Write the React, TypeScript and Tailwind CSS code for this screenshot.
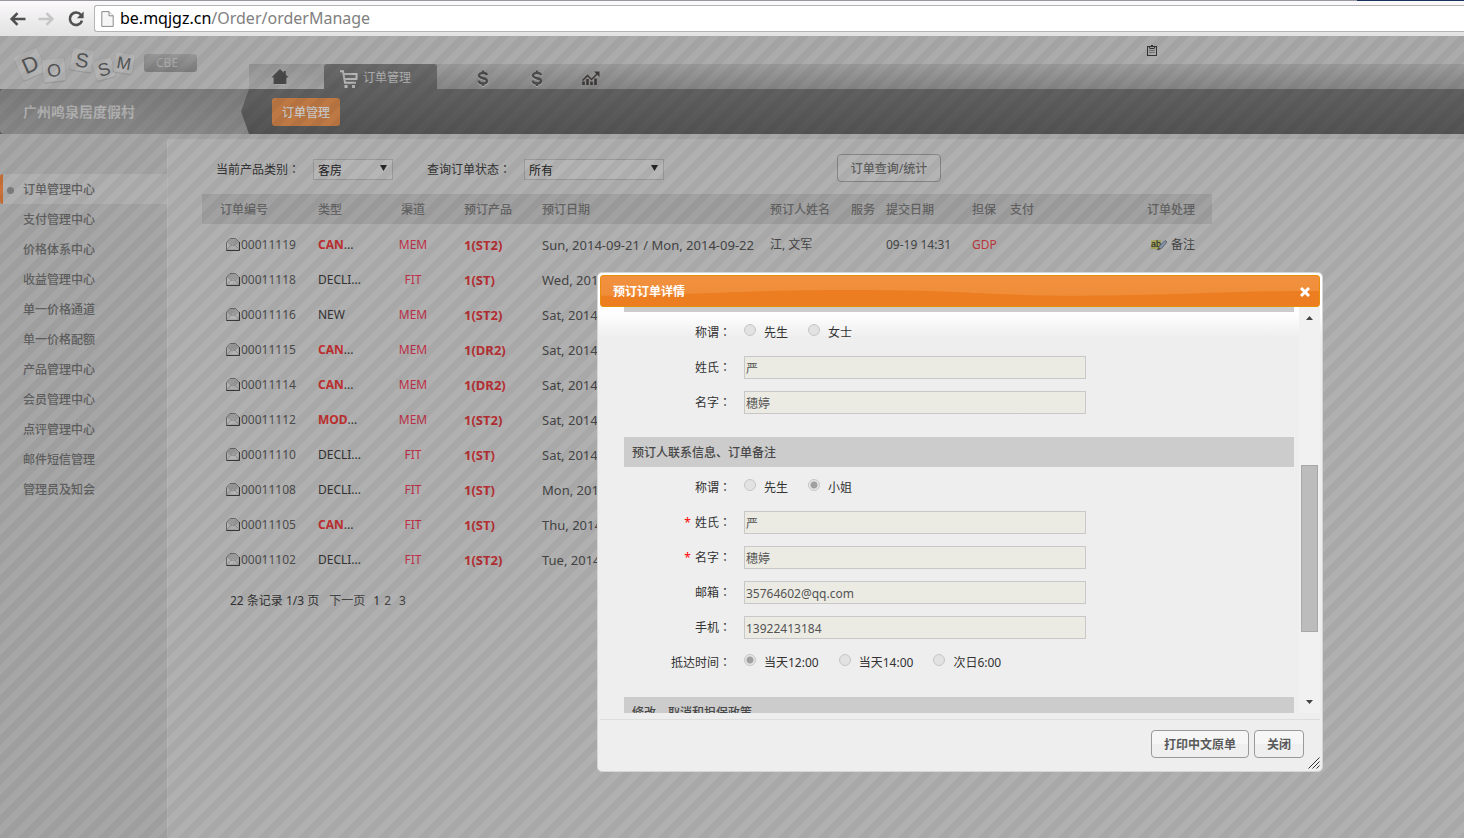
import React from "react";

const sidebarItems = [
  "订单管理中心",
  "支付管理中心",
  "价格体系中心",
  "收益管理中心",
  "单一价格通道",
  "单一价格配额",
  "产品管理中心",
  "会员管理中心",
  "点评管理中心",
  "邮件短信管理",
  "管理员及知会",
];

type Order = {
  id: string;
  type: string;
  urgent?: boolean;
  channel: string;
  product: string;
  date: string;
  name?: string;
  submitted?: string;
  guarantee?: string;
};

const orders: Order[] = [
  { id: "00011119", type: "CAN", urgent: true, channel: "MEM", product: "1(ST2)", date: "Sun, 2014-09-21 / Mon, 2014-09-22", name: "江, 文军", submitted: "09-19 14:31", guarantee: "GDP" },
  { id: "00011118", type: "DECLI...", channel: "FIT", product: "1(ST)", date: "Wed, 2014-09-17" },
  { id: "00011116", type: "NEW", channel: "MEM", product: "1(ST2)", date: "Sat, 2014-09-20" },
  { id: "00011115", type: "CAN", urgent: true, channel: "MEM", product: "1(DR2)", date: "Sat, 2014-09-20" },
  { id: "00011114", type: "CAN", urgent: true, channel: "MEM", product: "1(DR2)", date: "Sat, 2014-09-20" },
  { id: "00011112", type: "MOD", urgent: true, channel: "MEM", product: "1(ST2)", date: "Sat, 2014-09-20" },
  { id: "00011110", type: "DECLI...", channel: "FIT", product: "1(ST)", date: "Sat, 2014-09-20" },
  { id: "00011108", type: "DECLI...", channel: "FIT", product: "1(ST)", date: "Mon, 2014-09-15" },
  { id: "00011105", type: "CAN", urgent: true, channel: "FIT", product: "1(ST)", date: "Thu, 2014-09-11" },
  { id: "00011102", type: "DECLI...", channel: "FIT", product: "1(ST2)", date: "Tue, 2014-09-09" },
];

function Colon() {
  return <span className="font-['Noto_Sans_CJK_TC',sans-serif]">：</span>;
}

function BrowserBar() {
  return (
    <div className="relative flex h-9 shrink-0 items-center border-t border-[#98989f] bg-linear-to-b from-[#fbf9fb] to-[#e2e2e2]">
      <div className="absolute -top-px right-0 h-px w-[107px] bg-[#17305c]" />
      <button aria-label="后退" className="ml-2 flex w-5 justify-center">
        <svg width="18" height="16" viewBox="0 0 18 16" fill="none" stroke="#505050" strokeWidth="2.6">
          <path d="M16.5 8H3M8.5 2.2 2.7 8l5.8 5.8" />
        </svg>
      </button>
      <button aria-label="前进" className="ml-2 flex w-5 justify-center">
        <svg width="18" height="16" viewBox="0 0 18 16" fill="none" stroke="#c6c6c6" strokeWidth="2.6">
          <path d="M1.5 8H15M9.5 2.2 15.3 8l-5.8 5.8" />
        </svg>
      </button>
      <button aria-label="刷新" className="ml-2 flex w-6 justify-center">
        <svg width="18" height="18" viewBox="0 0 18 18" fill="none">
          <path d="M14.2 5.2A6.2 6.2 0 1 0 15 10.6" stroke="#505050" strokeWidth="2.6" />
          <path d="M16.6 1.4v6.8H9.8z" fill="#505050" />
        </svg>
      </button>
      <div className="ml-1.5 flex h-[27px] flex-1 items-center rounded-l-[3px] border border-r-0 border-[#b4b4b4] bg-white pl-1.5">
        <svg width="13" height="16" viewBox="0 0 13 16" fill="#f6f6f6" stroke="#8a8a8a">
          <path d="M.8.6h7.2l4.2 4.2v10.6H.8z" />
          <path d="M8 .6v4.2h4.2" />
        </svg>
        <div className="ml-[6px] pb-[2px] font-['Noto_Sans','Open_Sans',sans-serif] text-[16px] leading-6 text-[#808080]">
          <span className="text-black">be.mqjgz.cn</span>/Order/orderManage
        </div>
      </div>
    </div>
  );
}

function Logo() {
  const tiles = [
    { c: "D", x: 30, y: 28, r: -24, s: 26, f: 22 },
    { c: "O", x: 54, y: 34, r: -6, s: 23, f: 18 },
    { c: "S", x: 82, y: 24, r: 8, s: 22, f: 20 },
    { c: "S", x: 104, y: 33, r: -16, s: 20, f: 18 },
    { c: "M", x: 124, y: 27, r: 10, s: 20, f: 17 },
  ];
  return (
    <svg width="140" height="53" viewBox="0 0 140 53" role="img" aria-label="DOSSM">
      {tiles.map((t, i) => (
        <g key={i} transform={`translate(${t.x} ${t.y}) rotate(${t.r})`}>
          <rect x={-t.s / 2} y={-t.s / 2 + 1} width={t.s} height={t.s} rx="2" fill="#959595" />
          <rect x={-t.s / 2} y={-t.s / 2} width={t.s} height={t.s} rx="2" fill="#b3b3b3" stroke="#a4a4a4" strokeWidth=".6" />
          <text textAnchor="middle" y={t.f * 0.36} fontSize={t.f} fill="#555" fontFamily="Liberation Sans, sans-serif">
            {t.c}
          </text>
        </g>
      ))}
    </svg>
  );
}

function HomeIcon() {
  return (
    <svg width="18" height="17" viewBox="0 0 18 17">
      <path d="M9 1 0 9.600h2.600V16h13V9.600H18l-3-3V2.600h-2v2z" fill="#b4b4b4" opacity=".6" />
      <path d="M9 0 .4 8.600h2.200V15h12.800V8.600h2.200L14.800 5.800V2h-2v1.800z" fill="#494949" />
    </svg>
  );
}

function CartIcon() {
  return (
    <svg width="18" height="18" viewBox="0 0 18 18" fill="none" stroke="#b5b5b5" strokeWidth="2">
      <path d="M0 1.200h3l2 11.600h11" />
      <path d="M4 4h12.500v5H5" />
      <rect x="4.500" y="15" width="3" height="3" fill="#b5b5b5" stroke="none" />
      <rect x="12" y="15" width="3" height="3" fill="#b5b5b5" stroke="none" />
    </svg>
  );
}

function DollarIcon() {
  return (
    <svg width="12" height="18" viewBox="0 0 12 18" fill="none">
      <path d="M10.500 6.200C10 4.500 8.200 4 6 4 3.500 4 2 4.900 2 6.500c0 3.800 8.300 1.500 8.300 5.300C10.300 13.500 8.500 14.500 6 14.500S1.800 13.600 1.500 11.600M6 1v3M6 14.500V17" stroke="#b0b0b0" strokeWidth="2.400" />
      <path d="M10 5.200C9.600 3.700 8 3 6 3 3.500 3 2 4 2 5.600c0 3.700 8 1.500 8 5.200 0 1.700-1.600 2.700-4 2.700s-4-.9-4.300-2.900M6 .5V3M6 13.500V16" stroke="#4c4c4c" strokeWidth="2.400" />
    </svg>
  );
}

function ChartIcon() {
  return (
    <svg width="18" height="15" viewBox="0 0 18 15" fill="none">
      <path d="M1.500 10.500V14M5.500 8v6M9.500 10.500V14M13.500 7.500V14" stroke="#3e3838" strokeWidth="2.600" />
      <path d="M.5 9.500 5.500 4.500l4 4L16 2" stroke="#3e3838" strokeWidth="1.500" />
      <path d="M12 .5h5.500V6z" fill="#3e3838" />
    </svg>
  );
}

function MailIcon() {
  return (
    <svg width="14" height="13" viewBox="0 0 14 13" className="shrink-0">
      <path d="M.5 4.500 4 .5h5.500L13.300 4.500v8H.5z" fill="#b4b4b4" stroke="#666" />
      <path d="m1 4.500 3-3.500h5.500L13 4.500 9.500 7.500 7 5.800 4.500 7.500z" fill="#999" />
      <path d="M1 11.500 5 7.200h4l4 4.300" fill="none" stroke="#808080" strokeWidth=".8" />
      <path d="M.5 12.400h13V4" fill="none" stroke="#333" />
    </svg>
  );
}

function NoteIcon() {
  return (
    <svg width="17" height="12" viewBox="0 0 17 12">
      <rect width="10" height="9" y="1" fill="#a9a963" />
      <text x="0" y="8" fontSize="9" fill="#222" fontFamily="Liberation Sans, sans-serif">ab</text>
      <path d="m7 11 1-3.500L14 1.500l2 1.500L10.500 9.500z" fill="#8592a8" stroke="#4c5665" strokeWidth=".8" />
      <path d="M5 11.500 8 8.500l1.500 1.500z" fill="#55503e" />
    </svg>
  );
}

function Header() {
  return (
    <header className="shrink-0">
      <div className="flex h-[53px] items-stretch bg-[#ababab]">
        <div className="flex w-[249px] shrink-0">
          <Logo />
          <span className="mt-[18px] ml-1 h-[18px] w-[53px] rounded-[3px] bg-linear-to-b from-[#979797] to-[#7f7f7f] pl-3 font-['Noto_Sans',sans-serif] text-[12px] leading-[18px] text-[#ababab]">
            CBE
          </span>
        </div>
        <div className="flex flex-1 flex-col">
          <div className="flex h-7 flex-1 items-center">
            <button aria-label="剪贴板" className="ml-[898px]">
              <svg width="10" height="11" viewBox="0 0 10 11" fill="none">
                <rect x=".5" y="1.500" width="9" height="9" stroke="#333" />
                <path d="M2.500 3.500h5M4 .5h2" stroke="#333" />
                <path d="M2.500 3V1.500M7.500 3V1.500" stroke="#333" />
                <path d="M2 5.500h6M2 7.500h6" stroke="#777" />
              </svg>
            </button>
          </div>
          <nav className="flex h-[25px] items-center rounded-tl-[3px] bg-linear-to-b from-[#9c9c9c] to-[#858585]">
            <a href="#home" aria-label="首页" className="flex h-full w-[75px] items-center bg-linear-to-b from-[#969696] to-[#a2a2a2] pt-[2px] pl-[22px]">
              <HomeIcon />
            </a>
            <a href="#orders" className="flex h-full w-[113px] items-center gap-[5px] rounded-t-[3px] bg-linear-to-b from-[#6b6b6b] to-[#606060] pl-4 text-[12px] text-[#b0b0b0]">
              <span className="pt-[4px]"><CartIcon /></span>
              <span className="pt-[2px]">订单管理</span>
            </a>
            <a href="#pay" aria-label="支付" className="ml-10 pt-1"><DollarIcon /></a>
            <a href="#price" aria-label="价格" className="ml-[42px] pt-1"><DollarIcon /></a>
            <a href="#stats" aria-label="统计" className="ml-[39px] pt-1"><ChartIcon /></a>
          </nav>
        </div>
      </div>
      <div className="flex h-[45px] bg-linear-to-b from-[#616161] to-[#545454]">
        <div className="flex w-[249px] shrink-0 items-center rounded-l-[4px] bg-linear-to-b from-[#7d7d7d] to-[#898989] pl-[23px] text-[14px] font-bold text-[#b0b0b0] [clip-path:polygon(0_0,100%_0,241px_50%,100%_100%,0_100%)]">
          广州鸣泉居度假村
        </div>
        <div className="flex items-center pl-[23px]">
          <button className="h-7 rounded-[3px] bg-[#bd7843] px-[10px] pt-[2px] text-[12px] font-medium text-[#c8c8c8]">订单管理</button>
        </div>
      </div>
    </header>
  );
}

function Sidebar() {
  return (
    <nav className="w-[167px] shrink-0 pt-[35px]">
      {sidebarItems.map((item, i) => (
        <a
          key={item}
          href="#menu"
          className={
            i === 0
              ? "flex h-[30px] items-center rounded-l-[3px] border-l-[3px] border-[#cb7038] bg-[#b0b0b0] pt-[2px] pl-1 text-[12px] font-medium text-[#606060]"
              : "flex h-[30px] items-center pt-[2px] pl-[23px] text-[12px] font-medium text-[#606060]"
          }
        >
          {i === 0 && <span className="mr-[9px] size-[7px] rounded-full bg-[#808080]" />}
          {item}
        </a>
      ))}
    </nav>
  );
}

function SelectBox({ id, value, width }: { id: string; value: string; width: string }) {
  return (
    <span className="relative flex items-center">
      <select id={id} className={`${width} h-[21px] appearance-none border border-[#999] bg-[#b6b6b6] pt-[2px] pl-1 text-[12px] leading-[17px] text-[#222]`}>
        <option>{value}</option>
      </select>
      <svg className="pointer-events-none absolute top-[6px] right-[6px]" width="7" height="6" viewBox="0 0 7 6">
        <path d="M0 0h7L3.500 6z" fill="#262626" />
      </svg>
    </span>
  );
}

function Orders() {
  return (
    <main className="flex-1 rounded-tl-[4px] border-l border-[#b6b6b6] bg-[#b0b0b0] pl-[34px] text-[12px] text-[#454545]">
      <form className="flex h-[55px] items-center pt-[6px] pl-[14px]">
        <label htmlFor="category" className="w-[97px] text-[#333]">当前产品类别<Colon /></label>
        <SelectBox id="category" value="客房" width="w-[80px]" />
        <label htmlFor="status" className="ml-[34px] w-[97px] text-[#333]">查询订单状态<Colon /></label>
        <SelectBox id="status" value="所有" width="w-[140px]" />
        <button type="button" className="mb-1 ml-[173px] h-7 w-[104px] rounded-[4px] border border-[#858585] bg-[#b4b4b4] pt-[2px] font-medium text-[#606060]">
          订单查询/统计
        </button>
      </form>
      <table className="w-[1010px] table-fixed border-collapse text-left">
        <colgroup>
          <col className="w-[116px]" />
          <col className="w-[71px]" />
          <col className="w-[48px]" />
          <col className="w-[105px]" />
          <col className="w-[228px]" />
          <col className="w-[81px]" />
          <col className="w-[35px]" />
          <col className="w-[86px]" />
          <col className="w-[38px]" />
          <col className="w-[137px]" />
          <col className="w-[65px]" />
        </colgroup>
        <thead>
          <tr className="h-[30px] bg-[#a1a1a1] text-[#646464] [&>th]:p-0 [&>th]:pt-[2px] [&>th]:font-medium">
            <th><span className="pl-[18px]">订单编号</span></th>
            <th>类型</th>
            <th className="text-center">渠道</th>
            <th><span className="pl-[27px]">预订产品</span></th>
            <th>预订日期</th>
            <th>预订人姓名</th>
            <th>服务</th>
            <th>提交日期</th>
            <th>担保</th>
            <th>支付</th>
            <th>订单处理</th>
          </tr>
        </thead>
        <tbody className="[&_td]:p-0 [&_td]:pt-[6px]">
          {orders.map((o) => (
            <tr key={o.id} className="h-[35px] whitespace-nowrap">
              <td>
                <a href="#order" className="flex items-center gap-px pl-6 text-[#4c4c4c]">
                  <MailIcon />
                  {o.id}
                </a>
              </td>
              <td className="text-[#333]">
                {o.urgent ? <><b className="text-[#bf2f2f]">{o.type}</b>...</> : o.type}
              </td>
              <td className="text-center text-[#bf3048]">{o.channel}</td>
              <td className="text-[13px] leading-4 font-bold text-[#b52f33]"><span className="pl-[27px]">{o.product}</span></td>
              <td className="text-[13px] leading-4">{o.date}</td>
              <td>{o.name}</td>
              <td />
              <td>{o.submitted}</td>
              <td className="text-[#bf3838]">{o.guarantee}</td>
              <td />
              <td>
                {o.name && (
                  <a href="#note" className="flex items-center gap-[3px] pl-1">
                    <NoteIcon />
                    备注
                  </a>
                )}
              </td>
            </tr>
          ))}
        </tbody>
      </table>
      <div className="flex pt-[18px] pl-7">
        <span className="text-[#333]">22 条记录 1/3 页</span>
        <a href="#next" className="ml-[10px]">下一页</a>
        <span className="ml-2 text-[#333]">1</span>
        <a href="#2" className="ml-1">2</a>
        <a href="#3" className="ml-2">3</a>
      </div>
    </main>
  );
}

function Radio({ name, label, checked }: { name: string; label: string; checked?: boolean }) {
  return (
    <label className="mr-5 flex items-center gap-2">
      <input
        type="radio"
        name={name}
        disabled
        defaultChecked={checked}
        className="mb-[5px] size-[12px] appearance-none rounded-full border border-[#c6c6c6] bg-[#e2e2e2] checked:bg-[radial-gradient(circle,#a0a0a0_3px,#e6e6e6_4px)]"
      />
      {label}
    </label>
  );
}

function FieldRow({ label, required, htmlFor, children }: { label: string; required?: boolean; htmlFor?: string; children: React.ReactNode }) {
  return (
    <div className="flex h-[35px] items-center text-[#333]">
      <label htmlFor={htmlFor} className="mr-[13px] w-[107px] text-right">
        {required && <span className="mr-1 text-[#f00]">*</span>}
        {label}
        <Colon />
      </label>
      {children}
    </div>
  );
}

function TextField({ id, label, value, required }: { id: string; label: string; value: string; required?: boolean }) {
  return (
    <FieldRow label={label} required={required} htmlFor={id}>
      <input
        id={id}
        defaultValue={value}
        disabled
        className="h-[23px] w-[342px] border border-[#c8c8c8] bg-[#ebebe4] px-px pt-px text-[12px] text-[#545454]"
      />
    </FieldRow>
  );
}

function OrderDialog() {
  return (
    <section
      role="dialog"
      aria-label="预订订单详情"
      className="absolute top-[272px] left-[597px] flex w-[726px] flex-col rounded-[5px] border border-[#d6d6d6] bg-linear-to-b from-white from-8% to-[#eeeeee] to-13% p-[2px] text-[12px]"
    >
      <div className="relative flex h-8 items-center justify-between overflow-hidden rounded-[3px] border border-[#e78f08] bg-linear-to-b from-[#f1913f] to-[#ee8a35] px-3">
        <svg className="absolute inset-0 size-full" viewBox="0 0 720 32" preserveAspectRatio="none">
          <path d="M0 21C80 21 130 15 250 15S380 21 480 21 620 16 720 16V32H0z" fill="#ed7d21" />
        </svg>
        <h2 className="relative pt-[2px] font-bold text-white">预订订单详情</h2>
        <button aria-label="关闭窗口" className="relative -mr-[3px] pt-px">
          <svg width="10" height="10" viewBox="0 0 10 10" stroke="#fff" strokeWidth="3">
            <path d="m1 1 8 8M9 1 1 9" />
          </svg>
        </button>
      </div>
      <div className="flex h-[406px] justify-between overflow-hidden pl-6">
        <div className="w-[670px]">
          <div className="mb-[3px] h-[5px] bg-[#ccc]" />
          <FieldRow label="称谓">
            <Radio name="guest-title" label="先生" />
            <Radio name="guest-title" label="女士" />
          </FieldRow>
          <TextField id="guest-last" label="姓氏" value="严" />
          <TextField id="guest-first" label="名字" value="穗婷" />
          <h3 className="mt-[17px] mb-[3px] h-[30px] bg-[#ccc] pl-2 leading-[32px] font-medium text-[#484848]">预订人联系信息、订单备注</h3>
          <FieldRow label="称谓">
            <Radio name="contact-title" label="先生" />
            <Radio name="contact-title" label="小姐" checked />
          </FieldRow>
          <TextField id="last" label="姓氏" value="严" required />
          <TextField id="first" label="名字" value="穗婷" required />
          <TextField id="mail" label="邮箱" value="35764602@qq.com" />
          <TextField id="phone" label="手机" value="13922413184" />
          <FieldRow label="抵达时间">
            <Radio name="arrival" label="当天12:00" checked />
            <Radio name="arrival" label="当天14:00" />
            <Radio name="arrival" label="次日6:00" />
          </FieldRow>
          <h3 className="mt-[17px] h-[30px] bg-[#ccc] pl-2 leading-[32px] font-medium text-[#484848]">修改、取消和担保政策</h3>
        </div>
        <div className="flex w-[21px] flex-col items-center bg-[#f1f1f1]">
          <svg className="mt-[9px]" width="7" height="4" viewBox="0 0 7 4"><path d="M0 4h7L3.500 0z" fill="#444" /></svg>
          <div className="mt-[145px] h-[167px] w-[17px] border border-[#a8a8a8] bg-[#bcbcbc]" />
          <svg className="mt-[68px]" width="7" height="4" viewBox="0 0 7 4"><path d="M0 0h7L3.500 4z" fill="#444" /></svg>
        </div>
      </div>
      <div className="relative mt-[6px] flex h-[50px] justify-end gap-[5px] border-t border-[#ddd] pt-[10px] pr-4">
        <button className="h-7 w-[98px] rounded-[4px] border border-[#999] bg-linear-to-b from-[#f6f6f6] from-50% to-[#efefef] to-50% pt-[2px] font-bold text-[#5a5a5a]">打印中文原单</button>
        <button className="h-7 w-[50px] rounded-[4px] border border-[#999] bg-linear-to-b from-[#f6f6f6] from-50% to-[#efefef] to-50% pt-[2px] font-bold text-[#5a5a5a]">关闭</button>
        <svg className="absolute right-0 bottom-0" width="12" height="12" viewBox="0 0 12 12" stroke="#333">
          <path d="M.5 11.500l11-11M4.500 11.500l7-7M8.500 11.500l3-3" />
        </svg>
      </div>
    </section>
  );
}

export default function App() {
  return (
    <div className="relative flex min-h-screen flex-col bg-[#a6a6a6] font-['Noto_Sans','Noto_Sans_CJK_SC',sans-serif]">
      <BrowserBar />
      <div className="relative flex flex-1 flex-col">
        <Header />
        <div className="flex flex-1 pt-[5px]">
          <Sidebar />
          <Orders />
        </div>
        <div className="pointer-events-none absolute inset-0 bg-[linear-gradient(135deg,#0000000c_25%,transparent_25%,transparent_50%,#0000000c_50%,#0000000c_75%,transparent_75%)] bg-[length:20px_20px]" />
      </div>
      <OrderDialog />
    </div>
  );
}
